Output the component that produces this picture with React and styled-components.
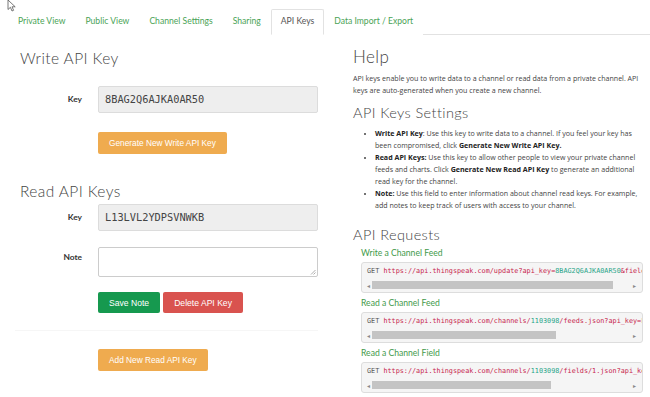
import React from "react";
import styled, { createGlobalStyle } from "styled-components";

const Global = createGlobalStyle`
body{
  margin: 0;
  background: #fff;
  font-family: Lato, "Open Sans", sans-serif;
  color: #333;
}
`

const Page = styled.div`
position: relative;
width: 650px;
height: 397px;
overflow: hidden;
`

const Cursor = styled.svg`
position: absolute;
left: 7px;
top: -1px;
`

const Tabs = styled.ul`
list-style: none;
margin: 0 0 0 8px;
padding: 9px 0 0 0;
display: flex;
border-bottom: 1px solid #e2e2e2;
`

const Tab = styled.li`
padding: 0 9px;
height: 24px;
line-height: 23px;
font-size: 8.6px;
color: ${props => props.$active ? "#555" : "#4aa356"};
border: 1px solid ${props => props.$active ? "#e2e2e2" : "transparent"};
border-bottom-color: ${props => props.$active ? "#fff" : "transparent"};
margin-bottom: -1px;
background: #fff;
border-radius: 2px 2px 0 0;
white-space: nowrap;
`

const Content = styled.div`
display: grid;
grid-template-columns: 315px 290px;
column-gap: 23px;
padding-left: 15px;
`

const Column = styled.div`
display: flex;
flex-direction: column;
`

const Heading = styled.h2`
font-family: Lato, sans-serif;
font-weight: 300;
font-size: ${props => props.$size || 15.5}px;
letter-spacing: 0.4px;
color: #444;
margin: ${props => props.$margin || "0"};
line-height: 1.2;
`

const FormRow = styled.div`
display: grid;
grid-template-columns: 67px 220px;
column-gap: 16px;
align-items: start;
margin: ${props => props.$margin || "0"};
`

const Label = styled.label`
text-align: right;
font-size: 8.4px;
font-weight: 700;
color: #333;
padding-top: ${props => props.$pt || 8}px;
`

const KeyBox = styled.div`
height: 27px;
box-sizing: border-box;
background: #eee;
border: 1px solid #dcdcdc;
border-radius: 2px;
padding: 0 6px;
font-family: "DejaVu Sans Mono", monospace;
font-size: 10.3px;
line-height: 25px;
color: #444;
`

const Note = styled.div`
position: relative;
height: 30px;
box-sizing: border-box;
background: #fff;
border: 1px solid #ccc;
border-radius: 2px;
`

const Grip = styled.svg`
position: absolute;
right: 1px;
bottom: 1px;
`

const Buttons = styled.div`
display: flex;
gap: 3px;
`

const Button = styled.button`
height: ${props => props.$h || 22}px;
padding: 0 ${props => props.$px || 10}px;
border: 1px solid transparent;
border-radius: 2px;
background: ${props => props.$bg};
color: #fff;
font-family: "Liberation Sans", Arial, sans-serif;
font-size: ${props => props.$fs || 8.3}px;
cursor: pointer;
white-space: nowrap;
`

const Rule = styled.hr`
border: 0;
border-top: 1px solid #f6f6f6;
margin: 17px 12px 16px 0;
`

const Para = styled.p`
font-family: "Open Sans", sans-serif;
font-size: 7.1px;
line-height: 12px;
color: #444;
margin: ${props => props.$margin || "0"};
`

const List = styled.ul`
margin: 5px 0 0 0;
padding-left: 22px;
font-family: "Open Sans", sans-serif;
font-size: 7.1px;
line-height: 12px;
color: #444;
li::marker { font-size: 6px; }
b { font-weight: 700; color: #222; }
`

const Requests = styled.div`
padding-left: 8px;
display: flex;
flex-direction: column;
`

const ReqLabel = styled.div`
font-size: 8.6px;
color: #3f9a4a;
margin: ${props => props.$margin || "0"};
line-height: 11px;
`

const Pre = styled.div`
margin-top: 3px;
height: 31px;
box-sizing: border-box;
border: 1px solid #ddd;
border-radius: 3px;
background: #f5f5f5;
padding: 4px 0 0 5px;
overflow: hidden;
`

const Code = styled.div`
font-family: "DejaVu Sans Mono", monospace;
font-size: 6.8px;
line-height: 9px;
white-space: nowrap;
color: #555;
span { color: #c7254e; }
em { font-style: normal; color: #2aa58a; }
`

const Scroll = styled.div`
display: flex;
align-items: center;
margin: 5px 4px 0 -2px;
height: 8px;
font-size: 6px;
color: #888;
`

const Arrow = styled.div`
width: 7px;
text-align: center;
`

const Track = styled.div`
flex: 1;
height: 8px;
`

const Thumb = styled.div`
height: 8px;
background: #c4c4c4;
`

const Request = ({ label, margin, thumb, children }) => (
  <>
    <ReqLabel $margin={margin}>{label}</ReqLabel>
    <Pre>
      <Code>{children}</Code>
      <Scroll>
        <Arrow>◂</Arrow>
        <Track><Thumb style={{ width: thumb }} /></Track>
        <Arrow>▸</Arrow>
      </Scroll>
    </Pre>
  </>
)

const App = () => {
  const tabs = ["Private View", "Public View", "Channel Settings", "Sharing", "API Keys", "Data Import / Export"]
  return (
    <Page>
      <Global />
      <Tabs>
        {tabs.map(t => <Tab key={t} $active={t === "API Keys"}>{t}</Tab>)}
      </Tabs>
      <Content>
        <Column>
          <Heading $margin="14px 0 0 5px">Write API Key</Heading>
          <FormRow $margin="18px 0 0 0">
            <Label>Key</Label>
            <KeyBox>8BAG2Q6AJKA0AR50</KeyBox>
          </FormRow>
          <FormRow $margin="17px 0 0 0">
            <span />
            <div><Button $bg="#efab4f">Generate New Write API Key</Button></div>
          </FormRow>
          <Heading $margin="28px 0 0 5px">Read API Keys</Heading>
          <FormRow $margin="4px 0 0 0">
            <Label>Key</Label>
            <KeyBox>L13LVL2YDPSVNWKB</KeyBox>
          </FormRow>
          <FormRow $margin="16px 0 0 0">
            <Label $pt={5}>Note</Label>
            <Note>
              <Grip width="6" height="6" viewBox="0 0 6 6">
                <path d="M5.5 1 L1 5.5 M5.5 3.5 L3.5 5.5" stroke="#999" strokeWidth="0.8" />
              </Grip>
            </Note>
          </FormRow>
          <FormRow $margin="15px 0 0 0">
            <span />
            <Buttons>
              <Button $bg="#16994f" $h={21} $px={10} $fs={8.6}>Save Note</Button>
              <Button $bg="#d9534f" $h={21} $px={10} $fs={8.6}>Delete API Key</Button>
            </Buttons>
          </FormRow>
          <Rule />
          <FormRow>
            <span />
            <div><Button $bg="#efab4f">Add New Read API Key</Button></div>
          </FormRow>
        </Column>
        <Column>
          <Heading $size={17} $margin="12px 0 0 0">Help</Heading>
          <Para $margin="5px 0 0 0">
            API keys enable you to write data to a channel or read data from a private channel. API keys are auto-generated when you create a new channel.
          </Para>
          <Heading $size={14.5} $margin="8px 0 0 0">API Keys Settings</Heading>
          <List>
            <li><b>Write API Key</b>: Use this key to write data to a channel. If you feel your key has been compromised, click <b>Generate New Write API Key.</b></li>
            <li><b>Read API Keys:</b> Use this key to allow other people to view your private channel feeds and charts. Click <b>Generate New Read API Key</b> to generate an additional read key for the channel.</li>
            <li><b>Note:</b> Use this field to enter information about channel read keys. For example, add notes to keep track of users with access to your channel.</li>
          </List>
          <Heading $size={14.5} $margin="15px 0 0 0">API Requests</Heading>
          <Requests>
            <Request label="Write a Channel Feed" margin="5px 0 0 0" thumb="93%">
              GET <span>https://api.thingspeak.com/update?api_key=<em>8BAG2Q6AJKA0AR50</em>&amp;field1=0</span>
            </Request>
            <Request label="Read a Channel Feed" margin="5px 0 0 0" thumb="71%">
              GET <span>https://api.thingspeak.com/channels/<em>1103098</em>/feeds.json?api_key=<em>L13LVL2YDPSVNWKB</em></span>
            </Request>
            <Request label="Read a Channel Field" margin="5px 0 0 0" thumb="69%">
              GET <span>https://api.thingspeak.com/channels/<em>1103098</em>/fields/1.json?api_key=<em>L13LVL2YDPSVNWKB</em></span>
            </Request>
          </Requests>
        </Column>
      </Content>
      <Cursor width="10" height="13" viewBox="0 0 10 13">
        <path d="M1 1 L1 10.5 L3.4 8.3 L5 12 L6.6 11.3 L5 7.8 L8.2 7.8 Z" fill="#fff" stroke="#555" strokeWidth="0.8" />
      </Cursor>
    </Page>
  )
}

export default App
